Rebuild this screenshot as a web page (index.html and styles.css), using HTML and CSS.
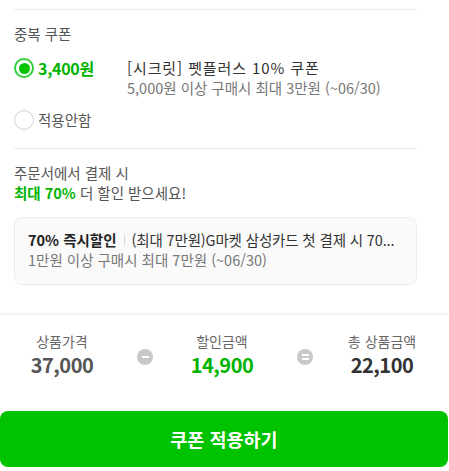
FILE: index.html
```html
<!DOCTYPE html>
<html lang="ko">
<head>
<meta charset="utf-8">
<link rel="stylesheet" href="styles.css">
</head>
<body>
<div class="content">
  <div class="rule"></div>
  <div class="section-title">중복 쿠폰</div>
  <div class="option">
    <span class="radio checked"></span>
    <span class="amount">3,400원</span>
    <div class="coupon">
      <div class="coupon-name">[시크릿] 펫플러스 10% 쿠폰</div>
      <div class="coupon-cond">5,000원 이상 구매시 최대 3만원 (~06/30)</div>
    </div>
  </div>
  <div class="option none">
    <span class="radio"></span>
    <span class="none-label">적용안함</span>
  </div>
  <div class="rule"></div>
  <div class="promo">
    <div>주문서에서 결제 시</div>
    <div><strong class="green">최대 70%</strong> 더 할인 받으세요!</div>
  </div>
  <div class="card">
    <div class="card-line"><strong>70% 즉시할인</strong><span class="sep"></span><span class="card-desc">(최대 7만원)G마켓 삼성카드 첫 결제 시 70...</span></div>
    <div class="card-cond">1만원 이상 구매시 최대 7만원 (~06/30)</div>
  </div>
</div>
<div class="summary">
  <div class="sum-col">
    <div class="sum-label">상품가격</div>
    <div class="sum-value">37,000</div>
  </div>
  <span class="op"><span class="bar"></span></span>
  <div class="sum-col">
    <div class="sum-label">할인금액</div>
    <div class="sum-value sum-green">14,900</div>
  </div>
  <span class="op"><span class="bar"></span><span class="bar"></span></span>
  <div class="sum-col">
    <div class="sum-label">총 상품금액</div>
    <div class="sum-value sum-dark">22,100</div>
  </div>
</div>
<button class="apply">쿠폰 적용하기</button>
</body>
</html>
```
FILE: styles.css
```css
* { box-sizing: border-box; }
html, body { margin: 0; padding: 0; background: #fff; }
body {
  width: 449px;
  font-family: "Noto Sans CJK KR", "Noto Sans", sans-serif;
  color: #333;
  font-size: 14.5px;
}
.content { padding: 9px 32px 0 14px; }
.rule { height: 1px; background: #ececec; }
.section-title {
  margin-top: 14px;
  height: 20px;
  line-height: 20px;
  color: #555;
  font-size: 14.5px;
}
.option {
  display: flex;
  align-items: flex-start;
  margin-top: 14px;
}
.radio {
  width: 20px;
  height: 20px;
  border-radius: 50%;
  border: 1px solid #d4d4d4;
  display: inline-flex;
  align-items: center;
  justify-content: center;
  flex: none;
}
.radio.checked { border: 2px solid #2fd03a; }
.radio.checked::after {
  content: "";
  width: 11px;
  height: 11px;
  border-radius: 50%;
  background: #00c300;
}
.amount {
  margin-left: 4px;
  width: 89px;
  line-height: 20px;
  font-weight: 700;
  font-size: 16px;
  color: #00b400;
  letter-spacing: -0.3px;
}
.coupon-name { line-height: 20px; color: #333; font-size: 15px; letter-spacing: 0.9px; }
.coupon-cond { line-height: 20px; color: #777; }
.option.none { margin-top: 12px; margin-bottom: 18px; }
.none-label { margin-left: 4px; line-height: 20px; color: #555; }
.promo {
  margin-top: 14px;
  line-height: 20px;
  color: #555;
}
.green { color: #00b400; font-weight: 700; }
.card {
  margin-top: 14px;
  border: 1px solid #ececec;
  border-radius: 8px;
  background: #fafafa;
  padding: 12px 13px 14px;
}
.card-line {
  display: flex;
  align-items: center;
  line-height: 20px;
  white-space: nowrap;
}
.card-line strong { color: #222; font-weight: 700; flex: none; }
.sep { width: 1px; height: 10px; background: #d8d8d8; margin: 0 7px; flex: none; }
.card-desc { color: #333; letter-spacing: -0.15px; }
.card-cond { line-height: 20px; color: #777; }
.summary {
  margin-top: 28px;
  border-top: 2px solid #f3f3f3;
  display: flex;
  align-items: flex-start;
  padding: 15px 0 0;
  height: 98px;
}
.sum-col { width: 124px; text-align: center; }
.sum-label { line-height: 22px; font-size: 14px; color: #666; }
.sum-value {
  line-height: 26px;
  font-size: 20px;
  font-weight: 700;
  color: #555;
  letter-spacing: -0.5px;
}
.sum-value.sum-green { color: #00b400; }
.sum-value.sum-dark { color: #333; }
.op {
  margin: 19px 7px 0 13px;
  width: 16px;
  height: 16px;
  border-radius: 50%;
  background: #c8c8c8;
  display: inline-flex;
  flex-direction: column;
  align-items: center;
  justify-content: center;
  gap: 2px;
  flex: none;
}
.bar { width: 7px; height: 2px; background: #fff; }
.apply {
  display: block;
  width: 448px;
  height: 56px;
  border: 0;
  border-radius: 8px;
  background: #00c300;
  color: #fff;
  font-family: "Noto Sans CJK KR", "Noto Sans", sans-serif;
  font-size: 18.5px;
  font-weight: 700;
  padding: 0;
}
```
